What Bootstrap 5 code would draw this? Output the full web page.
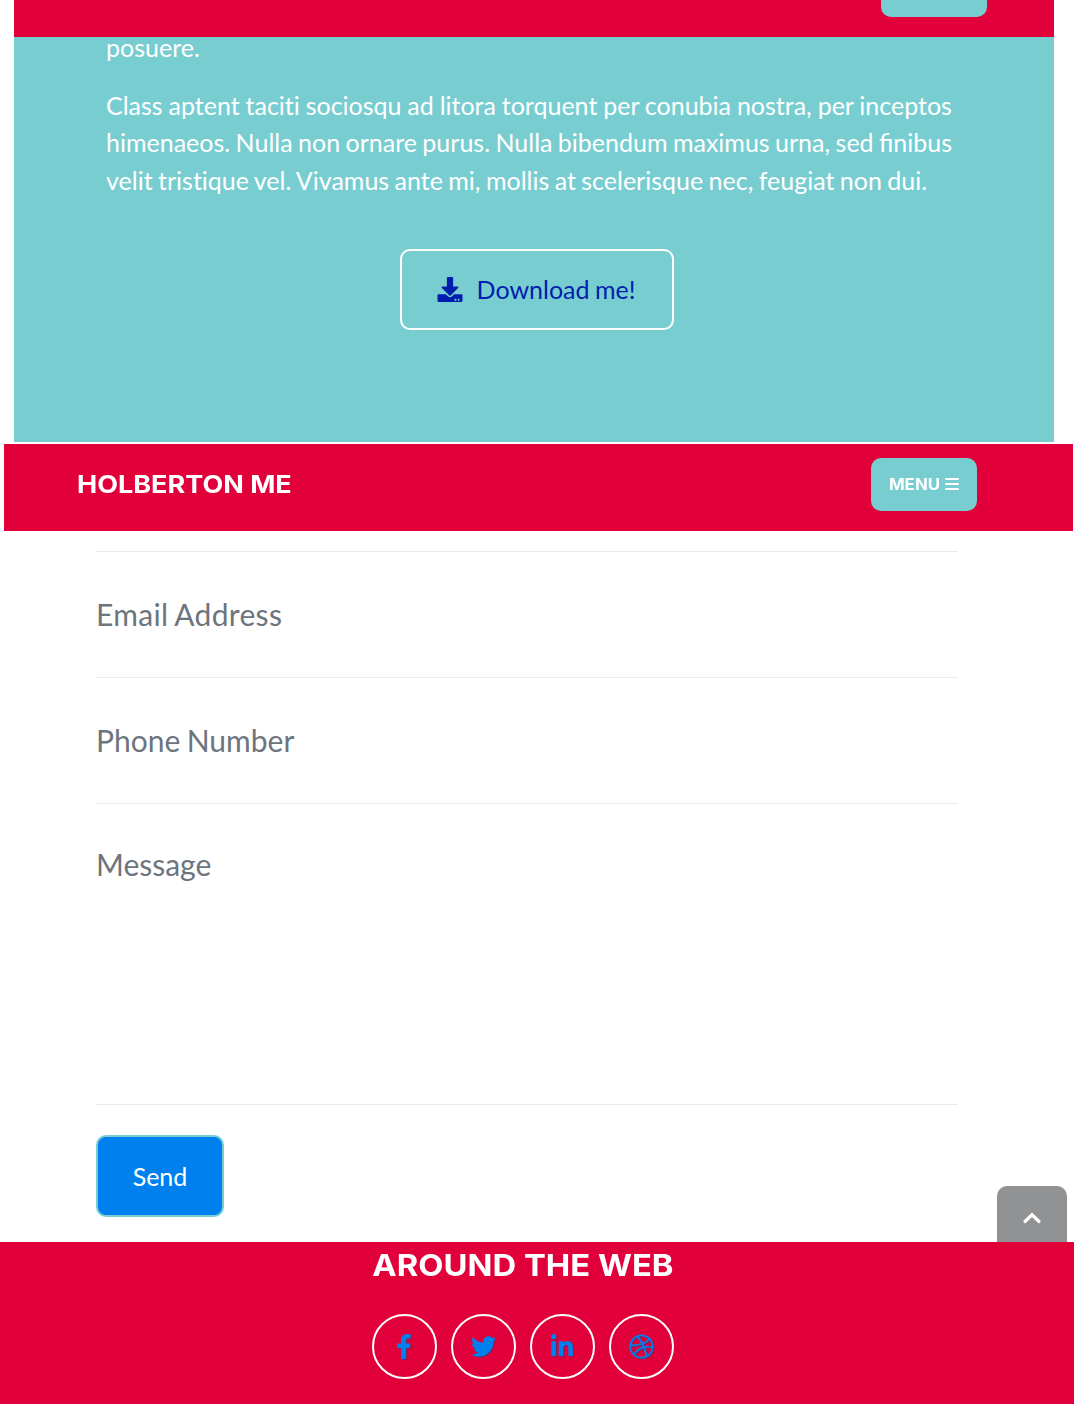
<!DOCTYPE html>
<html lang="en">
<head>
<meta charset="utf-8">
<meta name="viewport" content="width=device-width, initial-scale=1">
<title>Holberton Me</title>
<link href="https://cdn.jsdelivr.net/npm/bootstrap@5.3.0/dist/css/bootstrap.min.css" rel="stylesheet">
<style>
  :root { --brand-red: #e1003a; --brand-teal: #78cdd1; --brand-blue: #0080ef; }
  body { font-family: Lato, sans-serif; font-size: 25px; line-height: 1.5; background: #fff; height: 1404px; overflow: hidden; }
  .about { margin: 0 20px 2px 14px; height: 442px; background: var(--brand-teal); overflow: hidden; }
  .strip { height: 37px; background: var(--brand-red); padding-right: 67px; }
  .strip-tab { width: 106px; height: 17px; background: var(--brand-teal); border-radius: 0 0 10px 10px; }
  .about-text { margin-top: -8px; padding: 0 92px; word-spacing: -1px; }
  .about-text p { margin-bottom: 20px; white-space: nowrap; }
  .about-text .opening { word-spacing: -.55px; }
  .btn-dl { margin-top: 30px; margin-left: 6px; width: 274px; height: 81px; border: 2px solid #fff; border-radius: 10px; color: #001ead; font-size: 25px; word-spacing: -1px; padding: 6px 13px 6px 11px; }
  .btn-dl svg { width: 26px; height: 25px; margin-right: 14px; }
  .head-font { font-family: Inter, sans-serif; font-weight: 700; color: #fff; white-space: nowrap; }
  .brand-name, .web h4, .btn-menu span { display: inline-block; }
  .mainbar { margin: 0 1px 0 4px; height: 87px; padding: 0 96px 6px 73px; background: var(--brand-red); }
  .brand-name { font-size: 24px; transform: scaleX(1.125); transform-origin: left; }
  .btn-menu { width: 106px; height: 53px; border-radius: 10px; background: var(--brand-teal); font-size: 15.5px; padding: 0 0 0 2px; }
  .btn-menu span { transform: scaleX(1.09); }
  .btn-menu svg { width: 14px; height: 14px; margin: 0 0 1px 7px; }
  .contact { margin: 20px 116px 0 96px; height: 691px; border-top: 1px solid #e9ecef; }
  .contact .form-control { font-size: 30px; line-height: 45px; border: 0; border-bottom: 1px solid #e9ecef; border-radius: 0; padding: 0 0 2px; height: 126px; background: transparent; word-spacing: -1.2px; }
  .contact input[type=email] { letter-spacing: .33px; }
  .contact textarea.form-control { height: 301px; padding-top: 38px; resize: none; }
  .contact .form-control::placeholder { color: #6c757d; opacity: 1; }
  .btn-send { display: block; margin-top: 30px; padding: 8px 0 6px; width: 128px; height: 82px; border: 2px solid var(--brand-teal); border-radius: 10px; background: var(--brand-blue); color: #fff; font-size: 25px; }
  .to-top { right: 7px; top: 1186px; width: 70px; height: 56px; background: #919294; border-radius: 10px 10px 0 0; padding-top: 7px; }
  .web { height: 162px; background: var(--brand-red); padding-right: 28px; }
  .web h4 { font-size: 30px; line-height: 36px; margin: 5px 0 31px; transform: scaleX(1.092); }
  .social { gap: 14px; }
  .social a { width: 65px; height: 65px; border: 2px solid #fff; border-radius: 50%; color: var(--brand-blue); padding-right: 1px; }
  .social svg { height: 25px; filter: drop-shadow(1px 1px 0 rgba(40,60,110,.6)); }
</style>
<script src="https://cdn.jsdelivr.net/npm/bootstrap@5.3.0/dist/js/bootstrap.bundle.min.js"></script>
</head>
<body class="position-relative">
<section class="about">
  <div class="strip d-flex justify-content-end position-relative z-1"><div class="strip-tab"></div></div>
  <div class="about-text text-white">
    <p>posuere.</p>
    <p><span class="opening">Class aptent tacit&zwnj;i sociosqu ad litora torquent per conubia nostra, per inceptos</span><br>himenaeos. Nulla non ornare purus. Nulla bibendum maximus urna, sed finibus<br>velit trist&zwnj;ique vel. Vivamus ante mi, mollis at scelerisque nec, feugiat non dui.</p>
  </div>
  <div class="d-flex justify-content-center">
    <a href="#" class="btn btn-dl d-flex align-items-center justify-content-center">
      <svg viewBox="0 0 512 512" fill="currentColor"><path d="M216 0h80c13.3 0 24 10.7 24 24v168h87.7c17.8 0 26.7 21.5 14.1 34.1L269.7 378.3c-7.5 7.5-19.8 7.5-27.3 0L90.1 226.1c-12.6-12.6-3.7-34.1 14.1-34.1H192V24c0-13.3 10.7-24 24-24zm296 376v112c0 13.3-10.7 24-24 24H24c-13.3 0-24-10.7-24-24V376c0-13.3 10.7-24 24-24h146.7l49 49c20.1 20.1 52.5 20.1 72.6 0l49-49H488c13.3 0 24 10.7 24 24zm-124 88c0-11-9-20-20-20s-20 9-20 20 9 20 20 20 20-9 20-20zm64 0c0-11-9-20-20-20s-20 9-20 20 9 20 20 20 20-9 20-20z"/></svg>
      <span>Download me!</span>
    </a>
  </div>
</section>
<nav class="mainbar d-flex align-items-center justify-content-between">
  <a href="#" class="head-font brand-name text-decoration-none">HOLBERTON ME</a>
  <button type="button" class="btn btn-menu head-font d-flex align-items-center justify-content-center"><span>MENU</span><svg viewBox="0 0 14 14" stroke="#fff" stroke-width="2" stroke-linecap="round"><path d="M1 2h12M1 7h12M1 12h12"/></svg></button>
</nav>
<form class="contact">
  <input type="email" class="form-control shadow-none" placeholder="Email Address">
  <input type="tel" class="form-control shadow-none" placeholder="Phone Number">
  <textarea class="form-control shadow-none" placeholder="Message"></textarea>
  <button type="button" class="btn btn-send">Send</button>
</form>
<a href="#" class="to-top position-absolute d-flex align-items-center justify-content-center">
  <svg width="20" height="14" viewBox="0 0 20 14" fill="none" stroke="#fff" stroke-width="3.2" stroke-linecap="round"><path d="M3 10.5 10 3.8l7 6.7"/></svg>
</a>
<footer class="web d-flex flex-column align-items-center">
  <h4 class="head-font">AROUND THE WEB</h4>
  <div class="social d-flex">
    <a href="#" aria-label="Facebook" class="d-flex align-items-center justify-content-center"><svg viewBox="0 0 320 512" fill="currentColor"><path d="M279.14 288l14.22-92.66h-88.91v-60.13c0-25.35 12.42-50.06 52.24-50.06h40.42V6.26S260.43 0 225.36 0c-73.22 0-121.08 44.38-121.08 124.72v70.62H22.89V288h81.39v224h100.17V288z"/></svg></a>
    <a href="#" aria-label="Twitter" class="d-flex align-items-center justify-content-center"><svg viewBox="0 0 512 512" fill="currentColor"><path d="M459.37 151.716c.325 4.548.325 9.097.325 13.645 0 138.72-105.583 298.558-298.558 298.558-59.452 0-114.68-17.219-161.137-47.106 8.447.974 16.568 1.299 25.34 1.299 49.055 0 94.213-16.568 130.274-44.832-46.132-.975-84.792-31.188-98.112-72.772 6.498.974 12.995 1.624 19.818 1.624 9.421 0 18.843-1.3 27.614-3.573-48.081-9.747-84.143-51.98-84.143-102.985v-1.299c13.969 7.797 30.214 12.67 47.431 13.319-28.264-18.843-46.781-51.005-46.781-87.391 0-19.492 5.197-37.36 14.294-52.954 51.655 63.675 129.3 105.258 216.365 109.807-1.624-7.797-2.599-15.918-2.599-24.04 0-57.828 46.782-104.934 104.934-104.934 30.213 0 57.502 12.67 76.67 33.137 23.715-4.548 46.456-13.32 66.599-25.34-7.798 24.366-24.366 44.833-46.132 57.827 21.117-2.273 41.584-8.122 60.426-16.243-14.292 20.791-32.161 39.308-52.628 54.253z"/></svg></a>
    <a href="#" aria-label="LinkedIn" class="d-flex align-items-center justify-content-center"><svg viewBox="0 0 448 512" fill="currentColor"><path d="M100.28 448H7.4V148.9h92.88zM53.79 108.1C24.09 108.1 0 83.5 0 53.8a53.79 53.79 0 0 1 107.58 0c0 29.7-24.1 54.3-53.79 54.3zM447.9 448h-92.68V302.4c0-34.7-.7-79.2-48.29-79.2-48.29 0-55.69 37.7-55.69 76.7V448h-92.78V148.9h89.08v40.8h1.3c12.4-23.5 42.69-48.3 87.88-48.3 94 0 111.28 61.9 111.28 142.3V448z"/></svg></a>
    <a href="#" aria-label="Dribbble" class="d-flex align-items-center justify-content-center"><svg viewBox="0 0 512 512" fill="currentColor"><path d="M256 8C119.252 8 8 119.252 8 256s111.252 248 248 248 248-111.252 248-248S392.748 8 256 8zm163.97 114.366c29.503 36.046 47.369 81.957 47.835 131.955-6.984-1.477-77.018-15.682-147.502-6.818-5.752-14.041-11.181-26.393-18.617-41.614 78.321-31.977 113.818-77.482 118.284-83.523zM396.421 97.87c-3.81 5.427-35.697 48.286-111.021 76.519-34.712-63.776-73.185-116.168-79.04-124.008 67.176-16.193 137.966 1.27 190.061 47.489zm-230.48-33.25c5.585 7.659 43.438 60.116 78.537 122.509-99.087 26.313-186.36 25.934-195.834 25.809C62.38 147.205 106.678 92.573 165.941 64.62zM44.17 256.323c0-2.166.043-4.322.108-6.473 9.268.19 111.92 1.513 217.706-30.146 6.064 11.868 11.857 23.915 17.174 35.949-76.599 21.575-146.194 83.527-180.531 142.306C64.794 360.405 44.17 310.73 44.17 256.323zm81.807 167.113c22.127-45.233 82.178-103.622 167.579-132.756 29.74 77.283 42.039 142.053 45.189 160.638-68.112 29.013-150.015 21.053-212.768-27.882zm248.38 8.489c-2.171-12.886-13.446-74.897-41.152-151.033 66.38-10.626 124.7 6.768 131.947 9.055-9.442 58.941-43.273 109.844-90.795 141.978z"/></svg></a>
  </div>
</footer>
</body>
</html>
